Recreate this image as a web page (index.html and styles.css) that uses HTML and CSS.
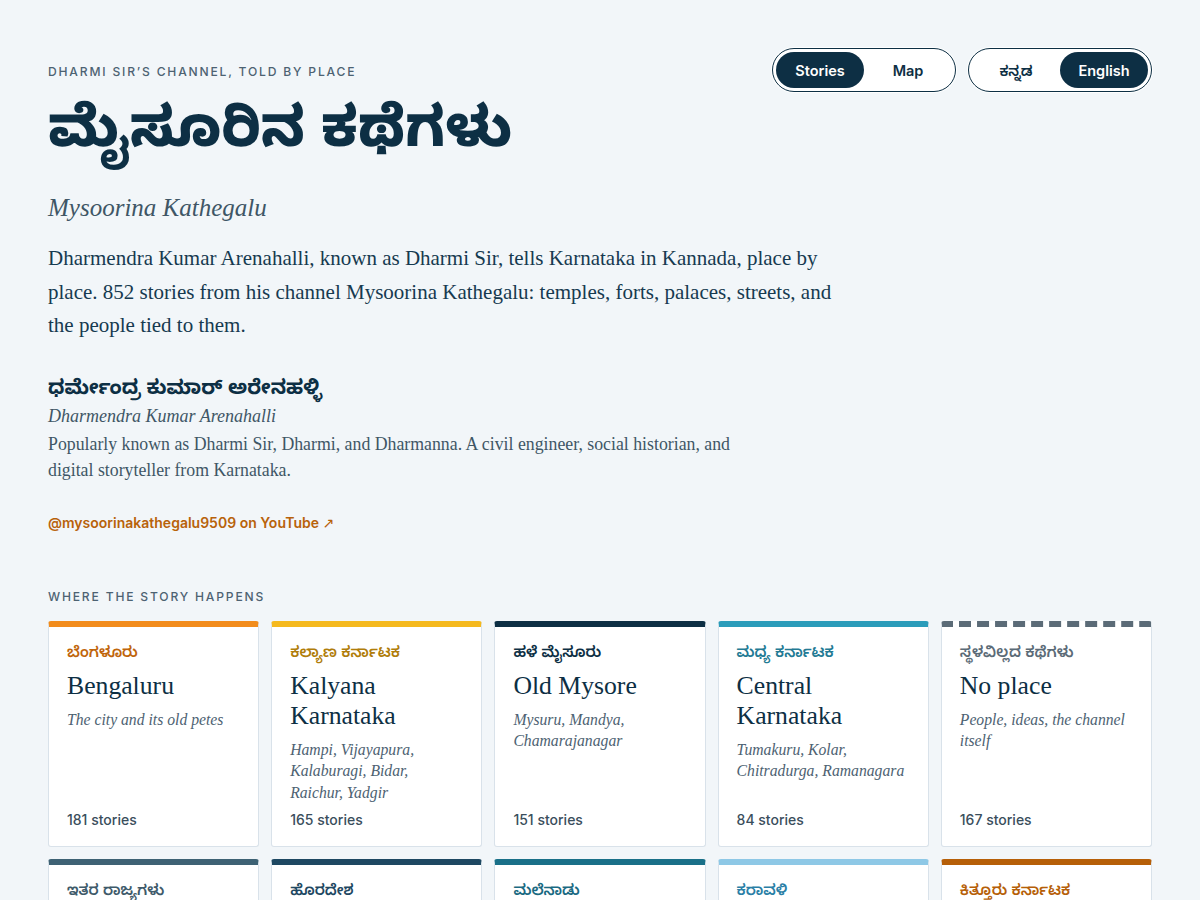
FILE: index.html
```html
<!DOCTYPE html>
<html lang="kn">
<head>
    <meta charset="utf-8">
    <title>Mysoorina Kathegalu</title>
    <link rel="stylesheet" href="styles.css">
</head>
<body>
    <div class="page">
        <header class="top">
            <div class="intro">
                <p class="eyebrow">Dharmi Sir’s channel, told by place</p>
                <h1 class="title">ಮೈಸೂರಿನ ಕಥೆಗಳು</h1>
                <p class="subtitle">Mysoorina Kathegalu</p>
            </div>
            <div class="toggles">
                <div class="pill-group">
                    <button class="pill active">Stories</button>
                    <button class="pill">Map</button>
                </div>
                <div class="pill-group">
                    <button class="pill kn">ಕನ್ನಡ</button>
                    <button class="pill active">English</button>
                </div>
            </div>
        </header>

        <p class="lead">Dharmendra Kumar Arenahalli, known as Dharmi Sir, tells Karnataka in Kannada, place by place. 852 stories from his channel Mysoorina Kathegalu: temples, forts, palaces, streets, and the people tied to them.</p>

        <section class="person">
            <h2 class="person-kn">ಧರ್ಮೇಂದ್ರ ಕುಮಾರ್ ಅರೇನಹಳ್ಳಿ</h2>
            <p class="person-en">Dharmendra Kumar Arenahalli</p>
            <p class="person-bio">Popularly known as Dharmi Sir, Dharmi, and Dharmanna. A civil engineer, social historian, and digital storyteller from Karnataka.</p>
            <a class="yt-link" href="#">@mysoorinakathegalu9509 on YouTube <span class="arrow">↗</span></a>
        </section>

        <section class="places">
            <p class="eyebrow">Where the story happens</p>
            <div class="grid">
                <div class="card c-bengaluru">
                    <div class="card-kn">ಬೆಂಗಳೂರು</div>
                    <div class="card-title">Bengaluru</div>
                    <div class="card-desc">The city and its old petes</div>
                    <div class="card-count">181 stories</div>
                </div>
                <div class="card c-kalyana">
                    <div class="card-kn">ಕಲ್ಯಾಣ ಕರ್ನಾಟಕ</div>
                    <div class="card-title">Kalyana Karnataka</div>
                    <div class="card-desc">Hampi, Vijayapura, Kalaburagi, Bidar, Raichur, Yadgir</div>
                    <div class="card-count">165 stories</div>
                </div>
                <div class="card c-mysore">
                    <div class="card-kn">ಹಳೆ ಮೈಸೂರು</div>
                    <div class="card-title">Old Mysore</div>
                    <div class="card-desc">Mysuru, Mandya, Chamarajanagar</div>
                    <div class="card-count">151 stories</div>
                </div>
                <div class="card c-central">
                    <div class="card-kn">ಮಧ್ಯ ಕರ್ನಾಟಕ</div>
                    <div class="card-title">Central Karnataka</div>
                    <div class="card-desc">Tumakuru, Kolar, Chitradurga, Ramanagara</div>
                    <div class="card-count">84 stories</div>
                </div>
                <div class="card c-noplace">
                    <div class="card-kn">ಸ್ಥಳವಿಲ್ಲದ ಕಥೆಗಳು</div>
                    <div class="card-title">No place</div>
                    <div class="card-desc">People, ideas, the channel itself</div>
                    <div class="card-count">167 stories</div>
                </div>
                <div class="card c-other">
                    <div class="card-kn">ಇತರ ರಾಜ್ಯಗಳು</div>
                    <div class="card-title">Other states</div>
                    <div class="card-desc">Beyond Karnataka</div>
                    <div class="card-count">40 stories</div>
                </div>
                <div class="card c-abroad">
                    <div class="card-kn">ಹೊರದೇಶ</div>
                    <div class="card-title">Abroad</div>
                    <div class="card-desc">Stories from outside India</div>
                    <div class="card-count">30 stories</div>
                </div>
                <div class="card c-malnad">
                    <div class="card-kn">ಮಲೆನಾಡು</div>
                    <div class="card-title">Malenadu</div>
                    <div class="card-desc">Shivamogga, Chikkamagaluru, Hassan</div>
                    <div class="card-count">80 stories</div>
                </div>
                <div class="card c-coast">
                    <div class="card-kn">ಕರಾವಳಿ</div>
                    <div class="card-title">Karavali</div>
                    <div class="card-desc">Udupi, Mangaluru, Uttara Kannada</div>
                    <div class="card-count">60 stories</div>
                </div>
                <div class="card c-kittur">
                    <div class="card-kn">ಕಿತ್ತೂರು ಕರ್ನಾಟಕ</div>
                    <div class="card-title">Kittur Karnataka</div>
                    <div class="card-desc">Belagavi, Dharwad, Bagalkot</div>
                    <div class="card-count">70 stories</div>
                </div>
            </div>
        </section>
    </div>
</body>
</html>
```

FILE: styles.css
```css
body {
    margin: 0;
    background-color: #f2f6f9;
    color: #0d2f44;
    font-family: "Liberation Serif", "Noto Sans Kannada", serif;
}

.page {
    padding: 48px 48px 40px;
}

.top {
    display: flex;
    justify-content: space-between;
    align-items: flex-start;
}

.eyebrow {
    margin: 16px 0 0;
    font-family: Inter, "Noto Sans", sans-serif;
    font-size: 12.1px;
    font-weight: 500;
    letter-spacing: 0.15em;
    text-transform: uppercase;
    color: #4d6272;
}

.title {
    margin: 10px 0 0;
    font-family: "Noto Sans Kannada", "Noto Sans", sans-serif;
    font-size: 56px;
    font-weight: 800;
    line-height: 100px;
    color: #0d2f44;
}

.subtitle {
    margin: 5px 0 0;
    font-style: italic;
    font-size: 25px;
    color: #3f5666;
}

.toggles {
    display: flex;
    gap: 12px;
}

.pill-group {
    display: flex;
    box-sizing: border-box;
    width: 184px;
    padding: 3px;
    border: 1px solid #0d2f44;
    border-radius: 22px;
    background-color: #fff;
    box-shadow: 0 0 0 1px #fff;
}

.pill {
    flex: 1;
    height: 36px;
    padding: 0;
    border: none;
    border-radius: 18px;
    background: none;
    font-family: Inter, "Noto Sans", sans-serif;
    font-size: 14.5px;
    font-weight: 600;
    color: #0d2f44;
    cursor: pointer;
}

.pill.kn {
    padding-top: 8px;
    font-family: "Noto Sans Kannada", "Noto Sans", sans-serif;
}

.pill.active {
    background-color: #0d2f44;
    color: #fff;
}

.lead {
    max-width: 800px;
    margin: 20px 0 0;
    font-size: 21px;
    line-height: 33.5px;
    color: #163a50;
}

.person {
    margin-top: 39px;
}

.person-kn {
    margin: 0;
    font-family: "Noto Sans Kannada", "Noto Sans", sans-serif;
    font-size: 20px;
    font-weight: 700;
    line-height: 20px;
}

.person-en {
    margin: 1px 0 0;
    font-style: italic;
    font-size: 18px;
    line-height: 26px;
    color: #3f5666;
}

.person-bio {
    max-width: 720px;
    margin: 2px 0 0;
    font-size: 17.8px;
    line-height: 26px;
    color: #3f5666;
}

.yt-link {
    display: inline-block;
    margin-top: 31px;
    font-family: Inter, "Noto Sans", sans-serif;
    font-size: 14px;
    font-weight: 600;
    color: #b8620a;
    text-decoration: none;
}

.arrow {
    font-family: "DejaVu Sans", sans-serif;
    font-weight: 400;
}

.places {
    margin-top: 57px;
}

.places .eyebrow {
    margin: 0 0 17px;
}

.grid {
    display: grid;
    grid-template-columns: repeat(5, 1fr);
    gap: 12px;
}

.card {
    display: flex;
    flex-direction: column;
    box-sizing: border-box;
    min-height: 226px;
    padding: 16px 20px 18px 18px;
    border: 1px solid #d9e2ea;
    border-top: 6px solid #0d2f44;
    border-radius: 3px;
    background-color: #fff;
}

.card-kn {
    font-family: "Noto Sans Kannada", "Noto Sans", sans-serif;
    font-size: 15px;
    font-weight: 600;
    line-height: 24px;
}

.card-title {
    margin-top: 4px;
    font-size: 25.7px;
    line-height: 30px;
    color: #0d2f44;
}

.card-desc {
    margin-top: 8px;
    font-style: italic;
    font-size: 15.7px;
    line-height: 21.5px;
    color: #4d6272;
}

.card-count {
    margin-top: auto;
    padding-top: 6px;
    font-family: Inter, "Noto Sans", sans-serif;
    font-size: 14px;
    font-weight: 500;
    line-height: 17px;
    color: #3a4e5c;
}

.c-bengaluru { border-top-color: #f28c1c; }
.c-bengaluru .card-kn { color: #c0650b; }
.c-kalyana { border-top-color: #f5b91e; }
.c-kalyana .card-kn { color: #b07d0a; }
.c-mysore { border-top-color: #0d2f44; }
.c-mysore .card-kn { color: #0d2f44; }
.c-central { border-top-color: #2b9cba; }
.c-central .card-kn { color: #237a94; }
.c-noplace {
    border-top: 6px dashed #5b6b77;
}
.c-noplace .card-kn { color: #5b6b77; }
.c-other { border-top-color: #3e6274; }
.c-other .card-kn { color: #3e5a6a; }
.c-abroad { border-top-color: #1e4862; }
.c-abroad .card-kn { color: #1e4862; }
.c-malnad { border-top-color: #1a7088; }
.c-malnad .card-kn { color: #1a6a82; }
.c-coast { border-top-color: #8ec8e6; }
.c-coast .card-kn { color: #2a7fa6; }
.c-kittur { border-top-color: #b65f08; }
.c-kittur .card-kn { color: #b65f08; }
```
